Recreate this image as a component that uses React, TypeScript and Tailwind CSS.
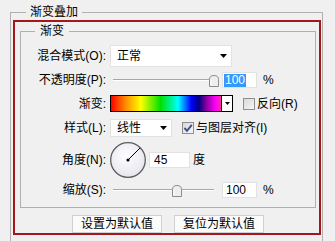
import React from "react";

const Arrow = ({ w = 7, h = 4 }: { w?: number; h?: number }) => (
  <svg width={w} height={h} viewBox={`0 0 ${w} ${h}`}>
    <path d={`M0 0H${w}L${w / 2} ${h}Z`} fill="#000" />
  </svg>
);

function Slider({ pos }: { pos: number }) {
  return (
    <div className="relative w-[108px] h-[16px]">
      <div className="absolute left-[3px] right-[4px] top-[7px] h-[2px] border-t border-t-[#a7a7a7] border-b border-b-white" />
      <svg
        className="absolute top-[3px]"
        style={{ left: pos }}
        width="10"
        height="12"
        viewBox="0 0 10 12"
      >
        <path
          d="M0.5 4.5 Q0.5 0.5 5 0.5 Q9.5 0.5 9.5 4.5 V11.5 H0.5 Z"
          fill="#eeeeee"
          stroke="#8c8c8c"
        />
        <path d="M2 5 V10.5" stroke="#ffffff" />
      </svg>
    </div>
  );
}

function Label({ children }: { children: React.ReactNode }) {
  return <div className="w-[85px] text-right shrink-0 mr-[4px]">{children}</div>;
}

function Checkbox({ checked }: { checked?: boolean }) {
  return (
    <div className="w-[12px] h-[12px] border border-[#8e8f8f] bg-[linear-gradient(135deg,#d8d8d8,#f7f7f7)] flex items-center justify-center">
      {checked && (
        <svg width="10" height="10" viewBox="0 0 10 10">
          <path d="M1.5 5 L4 7.8 L8.8 1.8" fill="none" stroke="#3a4f8c" strokeWidth="1.9" />
        </svg>
      )}
    </div>
  );
}

export default function App() {
  return (
    <div className="w-[335px] h-[241px] bg-[#f0f0f0] overflow-hidden text-[12px] leading-[16px] text-black font-['Liberation_Sans','Noto_Sans_CJK_SC',sans-serif]">
      <fieldset className="mt-[4px] ml-[10px] w-[313px] border border-[#b0b0b0] pb-[12px]">
        <legend className="ml-[15px] px-[4px] leading-[16px]">渐变叠加</legend>
        <div className="ml-[2px] w-[308px] border-2 border-[#a3171d]">
          <fieldset className="mt-[1px] ml-[5px] w-[296px] border border-[#b0b0b0] pb-[9px]">
            <legend className="ml-[14px] px-[5px] leading-[16px]">渐变</legend>

            <div className="mt-[6px] flex items-center h-[22px]">
              <Label>混合模式(O):</Label>
              <div className="w-[122px] h-[22px] bg-white border border-[#e2e2e2] flex items-center justify-between pl-[6px] pr-[4px]">
                <span>正常</span>
                <Arrow />
              </div>
            </div>

            <div className="mt-[5px] flex items-center h-[16px]">
              <Label>不透明度(P):</Label>
              <Slider pos={99} />
              <div className="ml-[4px] w-[35px] h-[16px] bg-white border border-[#e2e2e2] flex items-center pl-[1px]">
                <span className="bg-[#3399ff] text-white px-[1px] leading-[13px]">100</span>
              </div>
              <span className="ml-[6px]">%</span>
            </div>

            <div className="mt-[7px] flex items-center h-[17px]">
              <Label>渐变:</Label>
              <div className="flex w-[123px] h-[17px] border border-black">
                <div className="w-[110px] h-full bg-[linear-gradient(to_right,#ff0000_0%,#ff8000_12%,#ffff00_27%,#00e000_45%,#00ffff_61%,#0000ff_73%,#000080_80%,#9000a0_87%,#ff00ff_95%,#ff2aa0_100%)]" />
                <div className="flex-1 h-full bg-white border-l border-black flex items-center justify-center">
                  <Arrow w={5} h={3} />
                </div>
              </div>
              <div className="ml-[10px]">
                <Checkbox />
              </div>
              <span className="ml-[2px]">反向(R)</span>
            </div>

            <div className="mt-[7px] flex items-center h-[18px]">
              <Label>样式(L):</Label>
              <div className="w-[62px] h-[18px] bg-white border border-[#e2e2e2] flex items-center justify-between pl-[6px] pr-[4px]">
                <span>线性</span>
                <Arrow />
              </div>
              <div className="ml-[10px]">
                <Checkbox checked />
              </div>
              <span className="ml-[2px]">与图层对齐(I)</span>
            </div>

            <div className="mt-[4px] flex items-center h-[38px]">
              <Label>角度(N):</Label>
              <svg width="38" height="38" viewBox="0 0 38 38" className="-ml-[1px]">
                <defs>
                  <radialGradient id="dialg" cx="45%" cy="40%" r="65%">
                    <stop offset="0%" stopColor="#ffffff" />
                    <stop offset="100%" stopColor="#e4e4ec" />
                  </radialGradient>
                </defs>
                <circle cx="19" cy="19" r="17.3" fill="url(#dialg)" stroke="#5c5c66" strokeWidth="1.3" />
                <line x1="19" y1="19" x2="31" y2="7" stroke="#000" strokeWidth="1" />
                <circle cx="19" cy="19" r="1.6" fill="#000" />
              </svg>
              <div className="ml-[2px] w-[41px] h-[16px] bg-white border border-[#e2e2e2] flex items-center pl-[4px]">
                45
              </div>
              <span className="ml-[3px]">度</span>
            </div>

            <div className="mt-[3px] flex items-center h-[16px]">
              <Label>缩放(S):</Label>
              <Slider pos={62} />
              <div className="ml-[4px] w-[35px] h-[16px] bg-white border border-[#e2e2e2] flex items-center pl-[3px]">
                100
              </div>
              <span className="ml-[6px]">%</span>
            </div>
          </fieldset>

          <div className="mt-[7px] flex pl-[57px] gap-[12px]">
            <div className="w-[90px] h-[18px] bg-[#fbfbfb] border border-[#d0d0d0] flex items-center justify-center">
              设置为默认值
            </div>
            <div className="w-[90px] h-[18px] bg-[#fbfbfb] border border-[#d0d0d0] flex items-center justify-center">
              复位为默认值
            </div>
          </div>
        </div>
      </fieldset>
    </div>
  );
}
